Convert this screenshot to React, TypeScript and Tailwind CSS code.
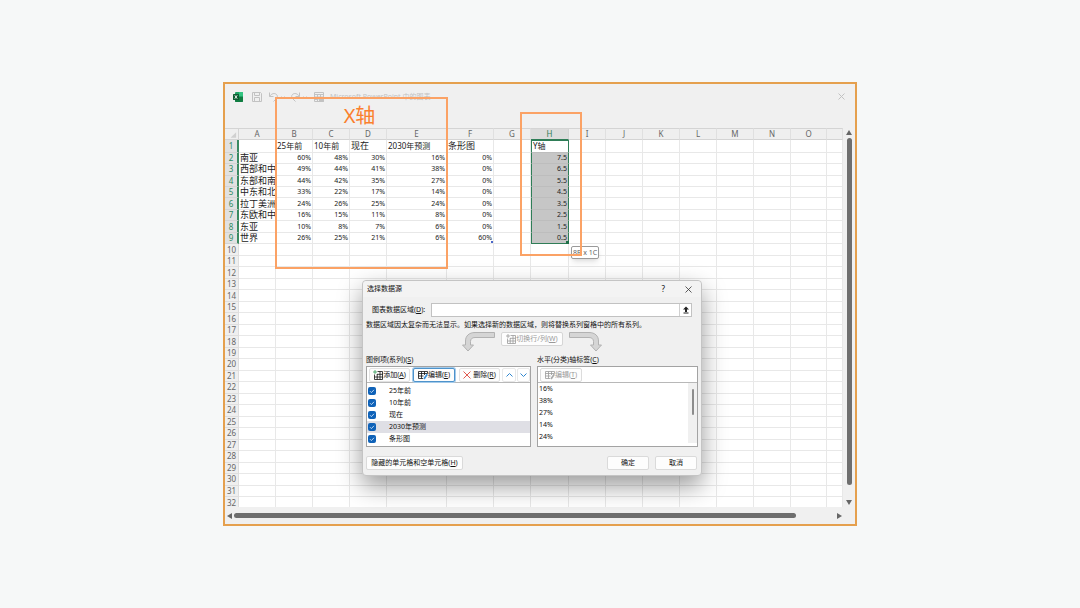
import type { ReactNode } from "react";

const columns = [
  { name: "A", width: "w-[37px]" },
  { name: "B", width: "w-[37px]" },
  { name: "C", width: "w-[37px]" },
  { name: "D", width: "w-[37px]" },
  { name: "E", width: "w-[60px]" },
  { name: "F", width: "w-[47px]" },
  { name: "G", width: "w-[37px]" },
  { name: "H", width: "w-[38px]" },
  { name: "I", width: "w-[37px]" },
  { name: "J", width: "w-[37px]" },
  { name: "K", width: "w-[37px]" },
  { name: "L", width: "w-[37px]" },
  { name: "M", width: "w-[37px]" },
  { name: "N", width: "w-[37px]" },
  { name: "O", width: "w-[36px]" },
  { name: "", width: "" },
];

const data = [
  ["", "25年前", "10年前", "现在", "2030年预测", "条形图", "", "Y轴"],
  ["南亚", "60%", "48%", "30%", "16%", "0%", "", "7.5"],
  ["西部和中", "49%", "44%", "41%", "38%", "0%", "", "6.5"],
  ["东部和南", "44%", "42%", "35%", "27%", "0%", "", "5.5"],
  ["中东和北", "33%", "22%", "17%", "14%", "0%", "", "4.5"],
  ["拉丁美洲", "24%", "26%", "25%", "24%", "0%", "", "3.5"],
  ["东欧和中", "16%", "15%", "11%", "8%", "0%", "", "2.5"],
  ["东亚", "10%", "8%", "7%", "6%", "0%", "", "1.5"],
  ["世界", "26%", "25%", "21%", "6%", "60%", "", "0.5"],
];

const rows = Array.from({ length: 32 }, (_, i) => data[i] ?? []);

const series = ["25年前", "10年前", "现在", "2030年预测", "条形图"];
const labels = ["16%", "38%", "27%", "14%", "24%"];

function cellClass(row: number, col: number, value: string) {
  let style = "relative whitespace-nowrap border-b border-r p-0 ";
  if (/^[\d.]+%?$/.test(value)) style += "pr-px text-right text-[7px] ";
  else if (/[\dY]/.test(value)) style += "pl-px text-[8px] ";
  else style += "pl-px text-[9px] ";

  // column H is the selected range
  if (col === 7 && row < 9) {
    style += "border-l border-l-[#2f7d57] border-r-[#2f7d57] ";
    style += row === 0 ? "border-t border-t-[#2f7d57] bg-white " : "bg-[#c6c6c6] ";
    style += row === 8 ? "border-b-[#2f7d57]" : "border-b-[#bdbdbd]";
  } else {
    style += "border-[#e8e8e8]";
  }
  return style;
}

function Sheet() {
  return (
    <table className="h-[381px] w-full table-fixed border-separate border-spacing-0 bg-white leading-[10px] text-[#222]">
      <colgroup>
        <col className="w-[14px]" />
        {columns.map((c, i) => (
          <col key={i} className={c.width} />
        ))}
      </colgroup>
      <thead>
        <tr className="h-3 bg-[#efefef] text-[8px] text-[#666]">
          <td className="border-b border-r border-t border-[#d4d4d4] p-0">
            <svg viewBox="0 0 14 10" className="block h-[10px] w-full">
              <path d="M12 3v6H6z" fill="#d0d0d0" />
            </svg>
          </td>
          {columns.map((c, i) => (
            <th
              key={i}
              scope="col"
              className={
                c.name === "H"
                  ? "border-b border-r border-t border-[#d4d4d4] border-b-[#2f7d57] bg-[#dcdcdc] p-0 font-normal text-[#2f7d57]"
                  : "border-b border-r border-t border-[#d4d4d4] border-r-[#e0e0e0] p-0 font-normal"
              }
            >
              {c.name}
            </th>
          ))}
        </tr>
      </thead>
      <tbody>
        {rows.map((row, r) => (
          <tr key={r}>
            <th
              scope="row"
              className={
                r < 9
                  ? "border-b border-r-2 border-[#d4d4d4] border-r-[#3a8a61] bg-[#e1e1e1] p-0 text-[8px] font-normal text-[#2f8a5f]"
                  : "border-b border-r border-[#dedede] bg-[#efefef] p-0 text-[8px] font-normal text-[#666]"
              }
            >
              {r + 1}
            </th>
            {columns.map((c, i) => (
              <td key={i} className={cellClass(r, i, row[i] ?? "")}>
                {row[i]}
                {r === 8 && i === 5 && (
                  <span className="absolute bottom-0 right-0 size-[2px] bg-[#4a66c8]" />
                )}
                {r === 8 && i === 7 && (
                  <span className="absolute -bottom-px -right-px size-[3px] bg-[#1f6f48]" />
                )}
              </td>
            ))}
          </tr>
        ))}
      </tbody>
    </table>
  );
}

function TitleBar() {
  return (
    <header className="flex h-[44px] items-start px-2 pt-2 text-[#c2c2c2]">
      <svg viewBox="0 0 10 10" className="size-[10px]">
        <rect x="2" y="0" width="8" height="10" rx="1" fill="#21a366" />
        <path d="M6 0h3a1 1 0 0 1 1 1v3H6z" fill="#33c481" />
        <path d="M2 5h8v4a1 1 0 0 1-1 1H3a1 1 0 0 1-1-1z" fill="#107c41" />
        <rect x="0" y="2" width="6" height="6" rx="0.6" fill="#0d5c31" />
        <path d="M1.8 3.3l2.4 3.4M4.2 3.3L1.8 6.7" stroke="#fff" strokeWidth="0.9" />
      </svg>
      <div className="ml-[9px] flex gap-[6px]">
        <button aria-label="保存">
          <svg viewBox="0 0 10 10" className="block size-[10px]" fill="none" stroke="currentColor">
            <path d="M.5.5h8l1 1v8h-9zM2.5.5v3h5v-3M2.5 9.500v-4h5v4" />
          </svg>
        </button>
        <button aria-label="撤消">
          <svg viewBox="0 0 17 10" className="block h-[10px] w-[17px]" fill="none" stroke="currentColor">
            <path d="M1.500.5v4h4M1.700 4.300C3.500 1.500 6.500.8 8.300 2.300s1 3.500-.3 4.700L5.500 9.500" />
            <path d="M13.500 4.500L15 6l1.500-1.500" />
          </svg>
        </button>
        <button aria-label="恢复">
          <svg viewBox="0 0 17 10" className="block h-[10px] w-[17px]" fill="none" stroke="currentColor">
            <path d="M8.500.5v4h-4M8.300 4.300C6.500 1.500 3.500.8 1.700 2.300S.7 5.800 2 7l2.500 2.500" />
            <path d="M12.500 4.500L14 6l1.500-1.500" />
          </svg>
        </button>
        <button aria-label="编辑数据">
          <svg viewBox="0 0 10 10" className="block size-[10px]" fill="none" stroke="currentColor">
            <path d="M.5.5h9v9h-9zM.5 2.500h9M.5 5h9M.5 7.500h4M3.500 2.500v7M6.500 2.500V5" />
            <path d="M5.500 6.500h4v3h-4z" fill="currentColor" />
          </svg>
        </button>
      </div>
      <h1 className="ml-[6px] text-[7px] leading-[10px]">Microsoft PowerPoint 中的图表</h1>
      <button aria-label="关闭" className="ml-auto mr-[2px] mt-px">
        <svg viewBox="0 0 7 7" className="block size-[7px]" stroke="currentColor">
          <path d="M.5.5l6 6M6.500.5l-6 6" />
        </svg>
      </button>
    </header>
  );
}

function GridIcon({ add = false, pen = "", plus = "#2f9a55" }: { add?: boolean; pen?: string; plus?: string }) {
  return (
    <svg viewBox="0 0 10 10" className="size-[10px] shrink-0" fill="none" stroke="currentColor" strokeWidth="0.8">
      {add ? (
        <>
          <path d="M4.500 1.500h5v8h-8v-5M1.500 7h8M4 4.300h5.500M4.200 4v5.500M7 1.500v8" />
          <path d="M2 0v4M0 2h4" stroke={plus} />
        </>
      ) : (
        <>
          <path d="M5 8.500H.5v-7h9v2M.5 3.500h9M.5 6h5M3.500 1.500v7M6.500 1.500V5" />
          <path d="M9.300 4.300L6 9" stroke={pen} strokeWidth="1.800" />
        </>
      )}
    </svg>
  );
}

function Button({ children, className = "" }: { children: ReactNode; className?: string }) {
  return (
    <button
      className={`flex h-[14px] items-center justify-center whitespace-nowrap rounded-[2px] border bg-[#fdfdfd] ${className}`}
    >
      {children}
    </button>
  );
}

function BentArrow({ flip = false }: { flip?: boolean }) {
  return (
    <svg
      viewBox="0 0 33 20"
      className={flip ? "h-5 w-[33px] -scale-x-100" : "h-5 w-[33px]"}
      fill="#d5d5d5"
      stroke="#b2b2b2"
    >
      <path d="M32.500.5H13C7 .5 3.500 4 3.500 9v4H.5L6 19l5.500-6h-3V9.500C8.500 7 10 5.500 13 5.500h19.500z" />
    </svg>
  );
}

function SelectDataDialog() {
  return (
    <section
      role="dialog"
      aria-labelledby="dialog-title"
      className="absolute left-[137px] top-[196px] w-[340px] rounded-[4px] border border-[#c4c4c4] bg-[#f0f0f0] pb-[5px] text-[7px] leading-[10px] text-[#111] shadow-[0_10px_24px_rgba(0,0,0,0.4)]"
    >
      <div className="flex h-4 items-center rounded-t-[4px] bg-[#f3f3f3] pl-1 pr-[9px]">
        <h2 id="dialog-title" className="flex-1">选择数据源</h2>
        <button aria-label="帮助" className="mr-5 text-[8px]">?</button>
        <button aria-label="关闭">
          <svg viewBox="0 0 7 7" className="block size-[7px]" stroke="#333" strokeWidth="0.8">
            <path d="M.5.5l6 6M6.500.5l-6 6" />
          </svg>
        </button>
      </div>

      <div className="mt-[6px] flex items-center px-[9px]">
        <label htmlFor="range" className="w-[59px]">
          图表数据区域(<u>D</u>):
        </label>
        <div className="flex h-[14px] flex-1 border border-[#c2c2c2] bg-white">
          <input id="range" className="min-w-0 flex-1 px-1 outline-none" />
          <button aria-label="折叠" className="flex w-3 items-center justify-center border-l border-[#d0d0d0]">
            <svg viewBox="0 0 8 8" className="size-2" fill="#222">
              <path d="M4 .5L7 3.500H5V6H3V3.500H1zM1.500 6.500h5v1h-5z" />
            </svg>
          </button>
        </div>
      </div>

      <p className="mt-[3px] whitespace-nowrap pl-[3px]">
        数据区域因太复杂而无法显示。如果选择新的数据区域，则将替换系列窗格中的所有系列。
      </p>

      <div className="mt-[2px] flex items-start justify-center gap-[6px]">
        <BentArrow />
        <Button className="w-[62px] border-[#d6d6d6] text-[#999]">
          <GridIcon add plus="#999" />
          <span>切换行/列(<u>W</u>)</span>
        </Button>
        <BentArrow flip />
      </div>

      <div className="mt-[3px] flex gap-[6px] px-[3px]">
        <div className="w-[165px]">
          <h3>图例项(系列)(<u>S</u>)</h3>
          <div className="mt-px border border-[#a3a3a3] bg-white">
            <div className="flex h-4 items-center border-b border-[#b8b8b8] pl-[2px]">
              <Button className="w-[41px] border-[#e2e2e2]">
                <GridIcon add />
                <span>添加(<u>A</u>)</span>
              </Button>
              <Button className="ml-[3px] w-[42px] border-[#4d93cc] ring-1 ring-[#a5cbea]">
                <GridIcon pen="#3b8fd6" />
                <span>编辑(<u>E</u>)</span>
              </Button>
              <Button className="ml-[4px] w-[41px] border-[#e2e2e2]">
                <svg viewBox="0 0 8 8" className="size-2" stroke="#e2594f">
                  <path d="M.5.5l7 7M7.500.5l-7 7" />
                </svg>
                <span className="ml-[2px]">删除(<u>R</u>)</span>
              </Button>
              <button aria-label="上移" className="ml-[2px] flex h-[14px] w-[14px] items-center justify-center rounded-[2px] border border-[#e8e8e8]">
                <svg viewBox="0 0 7 4" className="h-1 w-[7px]" fill="none" stroke="#2f86cf">
                  <path d="M.5 3.500l3-3 3 3" />
                </svg>
              </button>
              <button aria-label="下移" className="ml-px flex h-[14px] w-[13px] items-center justify-center rounded-[2px] border border-[#e8e8e8]">
                <svg viewBox="0 0 7 4" className="h-1 w-[7px]" fill="none" stroke="#2f86cf">
                  <path d="M.5.5l3 3 3-3" />
                </svg>
              </button>
            </div>
            <ul className="h-[63px] pt-[2px]">
              {series.map((name) => (
                <li key={name} className={name === "2030年预测" ? "bg-[#dfdfe5]" : ""}>
                  <label className="relative flex h-3 items-center pl-px">
                    <input
                      type="checkbox"
                      defaultChecked
                      className="mr-[13px] size-2 appearance-none rounded-[2px] bg-[#b5b5b5] checked:bg-[#0f62b8]"
                    />
                    <svg viewBox="0 0 8 8" className="absolute left-px size-2" fill="none" stroke="#cfe2f6" strokeWidth="0.9">
                      <path d="M2 4.200l1.400 1.400L6 2.800" />
                    </svg>
                    {name}
                  </label>
                </li>
              ))}
            </ul>
          </div>
        </div>

        <div className="flex-1">
          <h3>水平(分类)轴标签(<u>C</u>)</h3>
          <div className="mt-px border border-[#a3a3a3] bg-white">
            <div className="flex h-4 items-center border-b border-[#b8b8b8] pl-[2px]">
              <Button className="w-[42px] border-[#dcdcdc] text-[#999]">
                <GridIcon pen="#aaa" />
                <span>编辑(<u>T</u>)</span>
              </Button>
            </div>
            <div className="flex h-[63px] items-start justify-between">
              <ul className="pl-px">
                {labels.map((label) => (
                  <li key={label} className="h-3 leading-[12px]">
                    {label}
                  </li>
                ))}
              </ul>
              <div className="h-[60px] w-[9px] bg-[#f0f0f0] pl-1 pt-[6px]">
                <div className="h-[26px] w-[2px] rounded-full bg-[#8c8c8c]" />
              </div>
            </div>
          </div>
        </div>
      </div>

      <div className="mt-[9px] flex gap-[6px] pl-[3px] pr-1">
        <Button className="mr-auto w-[97px] border-[#dadada]">
          <span>隐藏的单元格和空单元格(<u>H</u>)</span>
        </Button>
        <Button className="w-[42px] border-[#dadada]">确定</Button>
        <Button className="w-[42px] border-[#dadada]">取消</Button>
      </div>
    </section>
  );
}

export default function App() {
  return (
    <main className="flex min-h-screen items-center justify-center bg-[#f6f8f8] font-['Noto_Sans','Noto_Sans_CJK_SC',sans-serif]">
      <div className="relative w-full max-w-[634px] border-2 border-[#e5a04e] bg-[#f0f0f0]">
        <TitleBar />

        <div className="flex">
          <div className="h-[379px] min-w-0 flex-1 overflow-hidden">
            <Sheet />
          </div>
          <div className="flex w-3 flex-col items-center py-[2px]">
            <svg viewBox="0 0 6 5" className="h-[5px] w-[6px]" fill="#666">
              <path d="M3 0l3 5H0z" />
            </svg>
            <div className="mt-[3px] h-[347px] w-[5px] rounded-full bg-[#6e6e6e]" />
            <svg viewBox="0 0 6 5" className="mt-auto h-[5px] w-[6px]" fill="#666">
              <path d="M3 5l3-5H0z" />
            </svg>
          </div>
        </div>

        <div className="flex h-[17px] items-center pl-[2px] pr-[13px]">
          <svg viewBox="0 0 5 6" className="h-[6px] w-[5px]" fill="#666">
            <path d="M0 3l5-3v6z" />
          </svg>
          <div className="ml-[2px] h-[5px] w-[562px] rounded-full bg-[#6e6e6e]" />
          <svg viewBox="0 0 5 6" className="ml-auto h-[6px] w-[5px]" fill="#666">
            <path d="M5 3L0 0v6z" />
          </svg>
        </div>

        {/* size hint shown beside the selected range */}
        <span className="absolute left-[346px] top-[162px] rounded-[2px] border border-[#9a9a9a] bg-white px-px text-[7px] leading-[11px] text-[#666] shadow-md">
          8R x 1C
        </span>

        <div className="absolute left-[50px] top-[13px] h-[172px] w-[173px] border-2 border-[#fba265] pr-1 pt-[5px] text-center text-[20px] leading-[24px] text-[#fb7f2d]">
          X轴
        </div>
        <div className="absolute left-[295px] top-[28px] h-[144px] w-[62px] border-2 border-[#fba265]" />

        <SelectDataDialog />
      </div>
    </main>
  );
}
